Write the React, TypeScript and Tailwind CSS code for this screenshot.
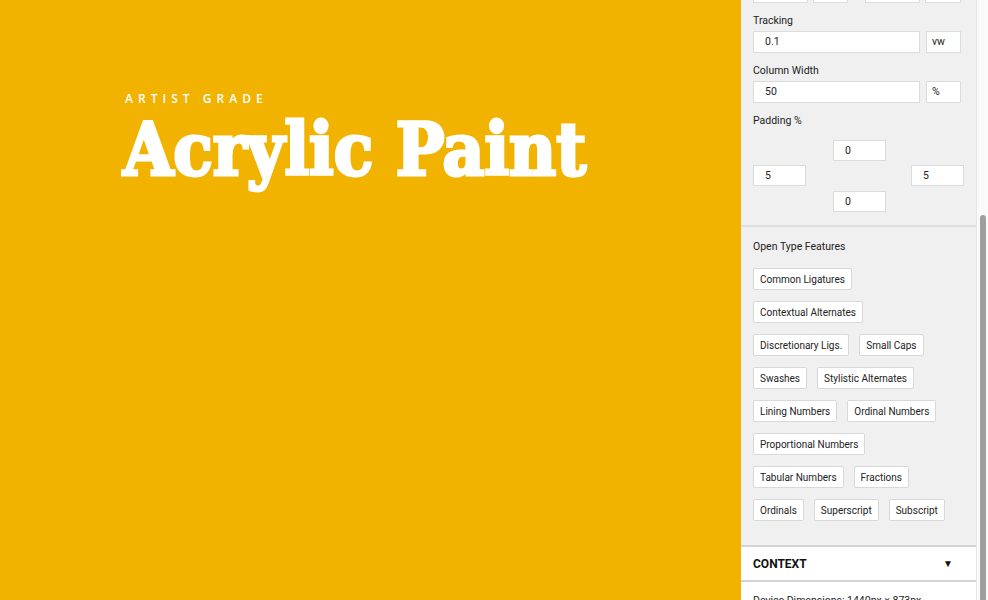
import React from "react";

const features: string[][] = [
  ["Common Ligatures"],
  ["Contextual Alternates"],
  ["Discretionary Ligs.", "Small Caps"],
  ["Swashes", "Stylistic Alternates"],
  ["Lining Numbers", "Ordinal Numbers"],
  ["Proportional Numbers"],
  ["Tabular Numbers", "Fractions"],
  ["Ordinals", "Superscript", "Subscript"],
];

const sans = { fontFamily: "Roboto, 'Liberation Sans', sans-serif" };

function Box({ value, className }: { value: string; className: string }) {
  return (
    <div
      className={
        "bg-white border border-[#dcdcdc] flex items-center text-[10.5px] text-[#222] " +
        className
      }
    >
      {value}
    </div>
  );
}

export default function App() {
  return (
    <div className="flex h-[600px] w-[988px] overflow-hidden" style={sans}>
      <div className="flex-1 bg-[#f1b300] pl-[123px] pt-[92px]">
        <div
          className="text-white text-[12px] tracking-[0.42em] pl-[2px] leading-[14px]"
          style={{ fontFamily: "'Open Sans', sans-serif", fontWeight: 600 }}
        >
          ARTIST GRADE
        </div>
        <div
          className="text-white text-[72px] leading-[76px] mt-[6px]"
          style={{
            fontFamily: "'DejaVu Serif Condensed', 'DejaVu Serif', serif",
            fontWeight: 700,
            fontStretch: "condensed",
            WebkitTextStroke: "3px white",
          }}
        >
          Acrylic Paint
        </div>
      </div>
      <div className="w-[235px] bg-[#f0f0f0] flex flex-col overflow-hidden">
        <div className="px-[12px] -mt-[19px] shrink-0">
          <div className="flex h-[22px]">
            <Box value="" className="h-[22px] w-[55px]" />
            <Box value="" className="h-[22px] w-[35px] ml-[5px]" />
            <Box value="" className="h-[22px] w-[55px] ml-[17px]" />
            <Box value="" className="h-[22px] w-[36px] ml-[5px]" />
          </div>
          <div className="text-[10.5px] text-[#222] mt-[11px] leading-[14px]">Tracking</div>
          <div className="flex mt-[3px]">
            <Box value="0.1" className="h-[22px] w-[167px] pl-[11px]" />
            <Box value="vw" className="h-[22px] w-[35px] ml-[6px] pl-[5px]" />
          </div>
          <div className="text-[10.5px] text-[#222] mt-[11px] leading-[14px]">Column Width</div>
          <div className="flex mt-[3px]">
            <Box value="50" className="h-[22px] w-[167px] pl-[11px]" />
            <Box value="%" className="h-[22px] w-[35px] ml-[6px] pl-[5px]" />
          </div>
          <div className="text-[10.5px] text-[#222] mt-[11px] leading-[14px]">Padding %</div>
          <div className="flex flex-col mt-[12px] w-[211px]">
            <div className="flex justify-center">
              <Box value="0" className="h-[21px] w-[53px] pl-[11px] ml-[2px]" />
            </div>
            <div className="flex justify-between mt-[4px]">
              <Box value="5" className="h-[21px] w-[53px] pl-[11px]" />
              <Box value="5" className="h-[21px] w-[53px] pl-[11px]" />
            </div>
            <div className="flex justify-center mt-[5px]">
              <Box value="0" className="h-[21px] w-[53px] pl-[11px] ml-[2px]" />
            </div>
          </div>
        </div>
        <div className="mt-[13px] border-t-2 border-[#dedede] shrink-0" />
        <div className="px-[12px] pt-[13px] h-[318px] shrink-0">
          <div className="text-[10.5px] text-[#222] leading-[14px]">Open Type Features</div>
          <div className="mt-[14px] flex flex-col gap-[11px]">
            {features.map((row, i) => (
              <div key={i} className="flex gap-[10px]">
                {row.map((f) => (
                  <div
                    key={f}
                    className="h-[22px] px-[6px] bg-white border border-[#d8d8d8] rounded-[2px] flex items-center text-[10px] text-[#222] whitespace-nowrap"
                  >
                    {f}
                  </div>
                ))}
              </div>
            ))}
          </div>
        </div>
        <div className="border-t-2 border-[#d4d4d4] bg-white h-[35px] shrink-0 flex items-center justify-between px-[12px]">
          <span className="text-[12px] font-bold text-[#111]">CONTEXT</span>
          <span className="text-[10px] text-[#111] mr-[11px]">▼</span>
        </div>
        <div className="border-t-2 border-[#d4d4d4] bg-white h-[60px] shrink-0 px-[12px] pt-[11px]">
          <div className="text-[10.5px] text-[#222] whitespace-nowrap">Device Dimensions: 1440px × 873px</div>
        </div>
      </div>
      <div className="w-[12px] bg-[#fafafa] border-l border-[#e6e6e6] flex flex-col items-center pt-[215px]">
        <div className="w-[6px] flex-1 bg-[#9f9f9f] rounded-t-[3px]" />
      </div>
    </div>
  );
}
